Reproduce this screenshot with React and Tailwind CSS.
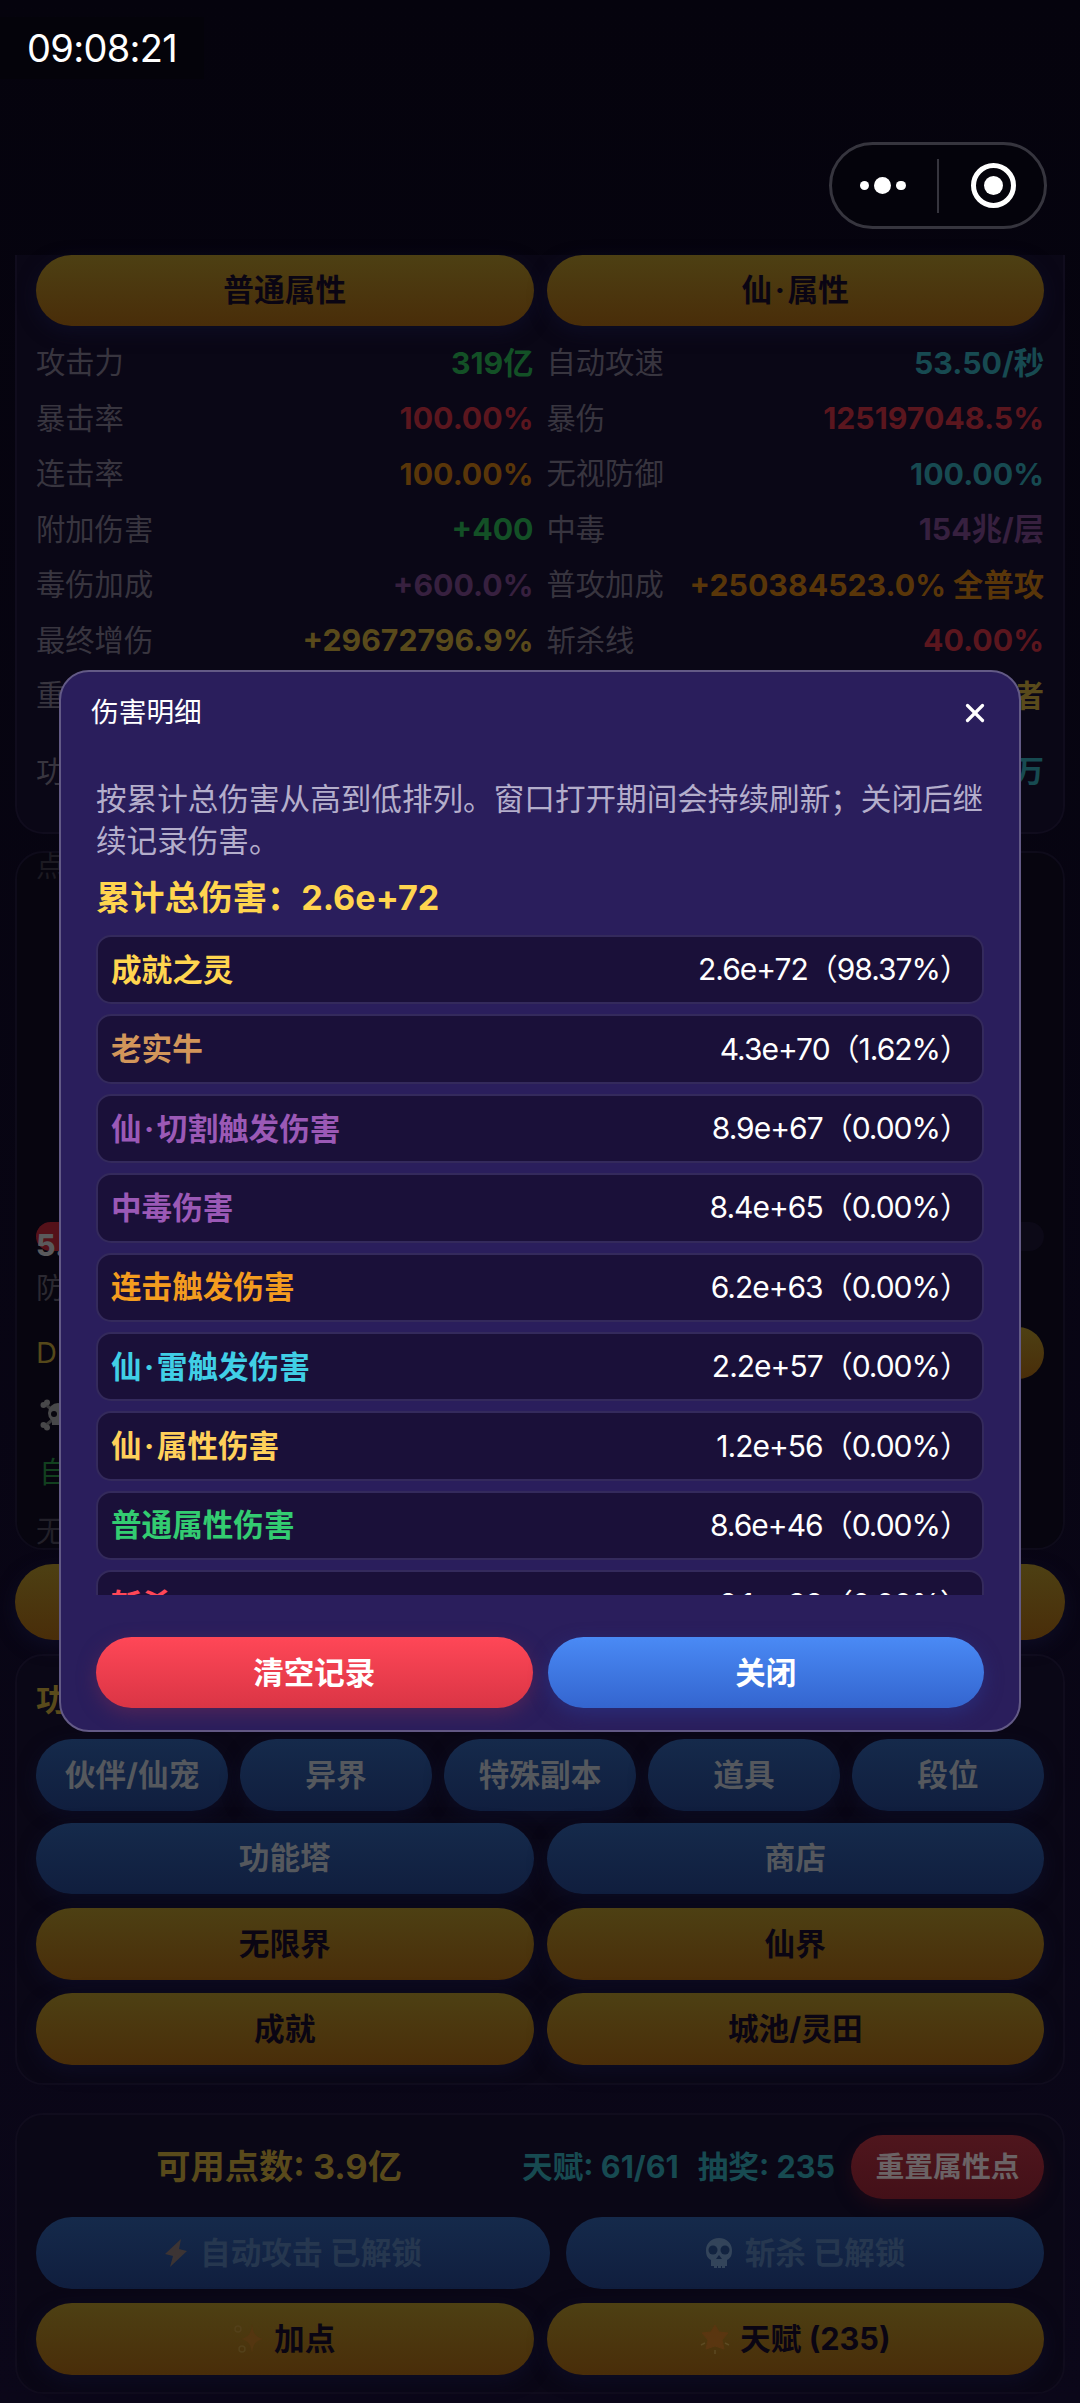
import React from 'react';
import { X } from 'lucide-react';

const stats = [
  ['攻击力', '319亿', 'text-[#135026]', '自动攻速', '53.50/秒', 'text-[#174a51]'],
  ['暴击率', '100.00%', 'text-[#5b161e]', '暴伤', '125197048.5%', 'text-[#5b161e]'],
  ['连击率', '100.00%', 'text-[#593609]', '无视防御', '100.00%', 'text-[#174a51]'],
  ['附加伤害', '+400', 'text-[#135026]', '中毒', '154兆/层', 'text-[#37203f]'],
  ['毒伤加成', '+600.0%', 'text-[#37203f]', '普攻加成', '+250384523.0% 全普攻', 'text-[#593609]'],
  ['最终增伤', '+29672796.9%', 'text-[#594a1b]', '斩杀线', '40.00%', 'text-[#5b161e]'],
  ['重', '', 'text-[#135026]', '', '者', 'text-[#594a1b]'],
];

const damage = [
  ['成就之灵', '2.6e+72（98.37%）', 'text-[#ffd54f]'],
  ['老实牛', '4.3e+70（1.62%）', 'text-[#d2965a]'],
  ['仙·切割触发伤害', '8.9e+67（0.00%）', 'text-[#9b59b6]'],
  ['中毒伤害', '8.4e+65（0.00%）', 'text-[#9b59b6]'],
  ['连击触发伤害', '6.2e+63（0.00%）', 'text-[#f39c1f]'],
  ['仙·雷触发伤害', '2.2e+57（0.00%）', 'text-[#40cfe6]'],
  ['仙·属性伤害', '1.2e+56（0.00%）', 'text-[#ffd05a]'],
  ['普通属性伤害', '8.6e+46（0.00%）', 'text-[#33cc71]'],
  ['斩杀', '2.1e+38（0.00%）', 'text-[#ff4757]'],
];

const variants = {
  gold: 'bg-linear-to-b from-[#4d4013] to-[#492d09] text-[#0a0513] shadow-[0_6px_18px_#0e0d24]',
  blue: 'bg-linear-to-b from-[#152a4b] to-[#101e3e] text-[#55585d] shadow-[0_6px_18px_#0c0d24]',
  locked: 'bg-linear-to-b from-[#152a4b] to-[#101e3e] text-[#26374f]',
};

const Pill = ({ variant, className = 'h-[72px] flex-1', children }) => (
  <button
    className={`${variants[variant]} ${className} flex items-center justify-center rounded-full text-[30.7px] font-bold whitespace-nowrap`}
  >
    {children}
  </button>
);

// the middle dot sits too tight between Chinese characters by default
const Dotted = ({ text }) => {
  const [head, tail] = text.split('·');
  if (!tail) return text;
  return (
    <span>
      {head}
      <span className="mx-[2.5px]">·</span>
      {tail}
    </span>
  );
};

const Bolt = () => (
  <svg viewBox="0 0 24 30" className="mr-3 h-[30px] w-6">
    <path d="M17 1 1 16l8 2-3 11 17-16-8-2z" fill="#3c3434" />
  </svg>
);

const Skull = () => (
  <svg viewBox="0 0 28 30" className="mr-3 h-[30px] w-7">
    <path d="M14 0C6 0 1 6 1 12c0 5 1 8 5 10v6h3v2h3v-2h1v2h3v-2h1v2h3v-2h2v-6c4-2 5-5 5-10 0-6-5-12-13-12z" fill="#33445a" />
    <circle cx="8" cy="12" r="4.5" fill="#122340" />
    <circle cx="20" cy="12" r="4.5" fill="#122340" />
    <path d="M14 17l-3 4h6z" fill="#122340" />
  </svg>
);

const Sparkles = () => (
  <svg viewBox="0 0 30 30" className="mr-2.5 h-[30px] w-[30px]">
    <path d="M18 0c1 9 3 13 11 15-8 2-10 6-11 14-1-8-3-12-11-14 8-2 10-6 11-15z" fill="#543610" />
    <circle cx="4" cy="5" r="3" fill="none" stroke="#53401a" strokeWidth="1.5" />
    <circle cx="8" cy="25" r="3" fill="none" stroke="#53401a" strokeWidth="1.5" />
  </svg>
);

const Star = () => (
  <svg viewBox="0 0 30 30" className="mr-2.5 h-[30px] w-[30px]">
    <path d="M15 1l4 7 9 1-6 7 2 9-9-3-9 3 2-9-6-7 9-1z" fill="#5a3610" strokeLinejoin="round" stroke="#5a3610" />
    <path d="M15 26v4M1 21l4-2M29 21l-4-2" stroke="#5c4a22" strokeWidth="1.5" />
  </svg>
);

const SkullBones = () => (
  <svg viewBox="0 0 36 32" className="h-8 w-9">
    <path d="M5 5l26 22M31 5L5 27" stroke="#38383a" strokeWidth="3" />
    <g fill="#48484a">
      <circle cx="3.5" cy="6" r="3" />
      <circle cx="7" cy="3.5" r="3" />
      <circle cx="3.5" cy="26" r="3" />
      <circle cx="7" cy="28.5" r="3" />
      <circle cx="32.5" cy="6" r="3" />
      <circle cx="29" cy="3.5" r="3" />
      <circle cx="32.5" cy="26" r="3" />
      <circle cx="29" cy="28.5" r="3" />
      <circle cx="18" cy="14" r="10" />
      <path d="M12 21h12v5H12z" />
    </g>
    <circle cx="14" cy="15" r="3" fill="#08060f" />
    <circle cx="22" cy="15" r="3" fill="#08060f" />
  </svg>
);

const Header = () => (
  <header className="flex h-[255px] flex-col">
    <div className="mt-[17px] flex h-[62px] w-[204px] items-center bg-[#04030a] pl-[27px] text-[38px] tracking-[-0.7px] text-white">
      09:08:21
    </div>
    <div className="mt-[63px] mr-[33px] flex h-[87px] w-[218px] items-center self-end rounded-full border-[3px] border-[#36353e] bg-[#04030b]">
      <div className="flex flex-1 items-center justify-center gap-[5px] pr-[3px]">
        <span className="h-[9.5px] w-[9.5px] rounded-full bg-white" />
        <span className="h-[17px] w-[17px] rounded-full bg-white" />
        <span className="h-[9.5px] w-[9.5px] rounded-full bg-white" />
      </div>
      <span className="h-[54px] w-[2.5px] bg-[#36353e]" />
      <div className="flex flex-1 items-center justify-center pl-[3px]">
        <span className="flex h-[45px] w-[45px] items-center justify-center rounded-full border-[5px] border-white">
          <span className="h-[19px] w-[19px] rounded-full bg-white" />
        </span>
      </div>
    </div>
  </header>
);

const StatsPanel = () => (
  <section className="h-[579px] rounded-b-[28px] border-2 border-t-0 border-[#100c1d] bg-[#0a0716] px-[19px]">
    <div className="flex gap-[13px]">
      <Pill variant="gold" className="h-[71px] flex-1">普通属性</Pill>
      <Pill variant="gold" className="h-[71px] flex-1"><Dotted text="仙·属性" /></Pill>
    </div>
    <div className="mt-[9.5px]">
      {stats.map(([label, value, color, label2, value2, color2]) => (
        <div key={label} className="flex h-[55.5px] items-center gap-[13px] text-[29.3px]">
          <div className="flex flex-1 items-center justify-between">
            <span className="text-[#38353f]">{label}</span>
            <span className={`text-[30.3px] font-bold ${color}`}>{value}</span>
          </div>
          <div className="flex flex-1 items-center justify-between whitespace-nowrap">
            <span className="text-[#38353f]">{label2}</span>
            <span className={`text-[30.3px] font-bold ${color2}`}>{value2}</span>
          </div>
        </div>
      ))}
      <div className="mt-5 flex h-[55px] items-center justify-between text-[29.3px]">
        <span className="text-[#38353f]">功</span>
        <span className="text-[30.3px] font-bold text-[#174a51]">万</span>
      </div>
    </div>
  </section>
);

const BattlePanel = () => (
  <section className="mt-[17px] h-[699px] rounded-[28px] border-2 border-[#0e0b1a] bg-[#07050f] px-[19px] text-[29px]">
    <p className="h-[369px] leading-[28px] text-[#1c1a22]">点</p>
    <div className="h-[29px] rounded-full bg-[#0c0917]">
      <div className="h-[29px] w-[80%] rounded-full bg-[#541119] text-[30px] leading-[46px] font-extrabold text-[#5a5a5c]">5.</div>
    </div>
    <p className="mt-[16px] leading-[44px] text-[#2b2931]">防</p>
    <div className="mt-[16px] flex h-[52px] items-center justify-between text-[#55481a]">
      <span>D</span>
      <span className="h-[52px] w-[140px] rounded-full bg-linear-to-b from-[#4d4013] to-[#492d09]" />
    </div>
    <div className="mt-[20px] flex h-8 items-center pl-1">
      <SkullBones />
    </div>
    <p className="mt-[20px] pl-[3px] leading-[44px] text-[#12401f]">自</p>
    <p className="mt-[15px] leading-[44px] text-[#222029]">无</p>
  </section>
);

const MenuPanel = () => (
  <section className="mt-[14px] flex h-[431px] flex-col rounded-[28px] border-2 border-[#100c1d] bg-[#0a0716] px-[19px]">
    <h2 className="h-[83px] pt-[22px] text-[31px] leading-[44px] font-bold text-[#594a1b]">功</h2>
    <div className="flex justify-between">
      {['伙伴/仙宠', '异界', '特殊副本', '道具', '段位'].map((name) => (
        <Pill key={name} variant="blue" className="h-[72px] w-[192px]">{name}</Pill>
      ))}
    </div>
    <div className="mt-[12px] flex gap-[13px]">
      <Pill variant="blue" className="h-[71px] flex-1">功能塔</Pill>
      <Pill variant="blue" className="h-[71px] flex-1">商店</Pill>
    </div>
    <div className="mt-[14px] flex gap-[13px]">
      <Pill variant="gold">无限界</Pill>
      <Pill variant="gold">仙界</Pill>
    </div>
    <div className="mt-[13px] flex gap-[13px]">
      <Pill variant="gold">成就</Pill>
      <Pill variant="gold">城池/灵田</Pill>
    </div>
  </section>
);

const PointsPanel = () => (
  <section className="mt-[28px] flex h-[281px] flex-col rounded-[28px] border-2 border-[#100c1d] bg-[#0a0716] px-[19px] pt-[20px]">
    <div className="flex h-[64px] items-center">
      <span className="flex-1 text-center text-[34.3px] font-bold whitespace-nowrap text-[#594a1b]">可用点数: 3.9亿</span>
      <div className="flex gap-[19px] text-[30.6px] font-bold whitespace-nowrap text-[#174a51]">
        <span>天赋: 61/61</span>
        <span>抽奖: 235</span>
      </div>
      <button className="ml-4 h-[64px] w-[193px] rounded-full bg-linear-to-b from-[#4f161d] to-[#431018] text-[28.8px] font-bold text-[#6b6365] shadow-[0_6px_16px_#1d0a17]">
        重置属性点
      </button>
    </div>
    <div className="mt-[18px] flex gap-4">
      <Pill variant="locked" className="h-[72px] w-[514px]"><Bolt />自动攻击 已解锁</Pill>
      <Pill variant="locked" className="h-[72px] flex-1"><Skull />斩杀 已解锁</Pill>
    </div>
    <div className="mt-[14px] flex gap-[13px]">
      <Pill variant="gold"><Sparkles />加点</Pill>
      <Pill variant="gold"><Star />天赋 (235)</Pill>
    </div>
  </section>
);

const DamageModal = () => (
  <div className="absolute top-[670px] left-[59px] flex h-[1062px] w-[962px] flex-col rounded-[30px] border-2 border-[#635a86] bg-[#2a1e5c]">
    <div className="flex h-[82px] items-center justify-between pr-[29px] pl-[30px]">
      <h1 className="text-[27.7px] text-white">伤害明细</h1>
      <X className="h-[30px] w-[30px] text-white" strokeWidth={2.6} />
    </div>
    <div className="mt-[24px] flex h-[817px] flex-col overflow-hidden px-[35px]">
      <p className="text-[30.6px] leading-[42px] text-[#b4aecb]">
        按累计总伤害从高到低排列。窗口打开期间会持续刷新；关闭后继续记录伤害。
      </p>
      <p className="mt-[10px] mb-[11px] text-[34.2px] leading-[52px] font-bold text-[#ffd54f]">累计总伤害：2.6e+72</p>
      <ul>
        {damage.map(([name, value, color]) => (
          <li key={name} className="mb-[10px] flex h-[69.4px] items-center justify-between rounded-[15px] border-2 border-[#342a5c] bg-[#1a1039] pr-[13px] pl-[13px]">
            <span className={`text-[30.6px] font-bold ${color}`}><Dotted text={name} /></span>
            <span className="text-[30px] tracking-[-1px] text-white">{value}</span>
          </li>
        ))}
      </ul>
    </div>
    <div className="mt-[42px] flex gap-[15px] px-[35px] text-[30.5px] font-bold text-white">
      <button className="h-[71px] flex-1 rounded-full bg-linear-to-b from-[#ff4757] to-[#da3545] shadow-[0_6px_18px_#4f2458]">清空记录</button>
      <button className="h-[71px] flex-1 rounded-full bg-linear-to-b from-[#4a8af5] to-[#3465cf] shadow-[0_6px_18px_#2a2c78]">关闭</button>
    </div>
  </div>
);

const App = () => {
  return (
    <div className="relative h-[2403px] w-[1080px] overflow-hidden bg-linear-to-b from-[#05030d] to-[#0b0719] font-[Inter,'Noto_Sans_CJK_SC',sans-serif]">
      <Header />
      <main className="px-[15px]">
        <StatsPanel />
        <BattlePanel />
        <div className="mt-[14px] flex">
          <Pill variant="gold" className="h-[76px] flex-1" />
        </div>
        <MenuPanel />
        <PointsPanel />
      </main>
      <DamageModal />
    </div>
  );
};

export default App;
